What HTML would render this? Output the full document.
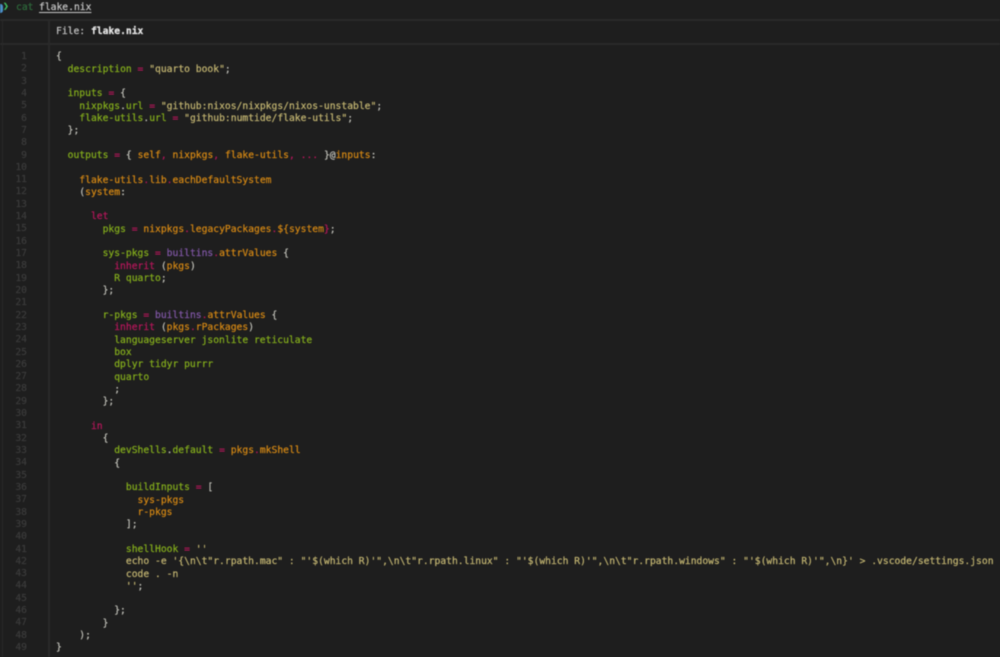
<!DOCTYPE html>
<html><head><meta charset="utf-8"><style>
html,body{margin:0;padding:0;width:1000px;height:657px;overflow:hidden;background:#1e1e1e}
#w{position:relative;width:1000px;height:657px;overflow:hidden;filter:blur(.4px);font-family:"DejaVu Sans Mono","Liberation Mono",monospace;font-size:9.685px;color:#c4c4bc;-webkit-text-stroke:.2px currentColor}
.a{position:absolute;white-space:pre}
pre{margin:0;position:absolute;font:inherit;line-height:12.313px;white-space:pre}
.r{position:absolute;background:#2a2a2a}
i{font-style:normal}
.g{color:#86b01c}.o{color:#d88a14}.p{color:#b8175c}.s{color:#c6b873}.v{color:#8258a8}.w{color:#c4c4bc}
</style></head><body><div id="w">
<div class="r" style="left:0;top:19px;width:1000px;height:2px"></div>
<div class="r" style="left:0;top:43px;width:1000px;height:2px"></div>
<div class="r" style="left:48px;top:19px;width:2px;height:638px"></div>
<div class="r" style="left:2px;top:19px;width:1px;height:638px"></div>
<div class="a" style="left:-2px;top:4px;width:5px;height:9px;border-radius:3px;background:#4a8fc8"></div>
<div class="a" style="left:3px;top:1px;color:#3fc060;font-weight:bold">❯</div>
<div class="a" style="left:16px;top:2px;color:#2f6b3c">cat</div>
<div class="a" style="left:39px;top:2px;color:#c8c8c8;text-decoration:underline;text-underline-offset:2px">flake.nix</div>
<div class="a" style="left:56px;top:26px;color:#c4c4c4">File: <b style="color:#e8e8e8">flake.nix</b></div>
<pre style="left:0;width:27px;top:51px;text-align:right;color:#3c3c3c">1
2
3
4
5
6
7
8
9
10
11
12
13
14
15
16
17
18
19
20
21
22
23
24
25
26
27
28
29
30
31
32
33
34
35
36
37
38
39
40
41
42
43
44
45
46
47
48
49</pre>
<pre style="left:56px;top:51.4px">{
  <i class="g">description</i> <i class="p">=</i> <i class="s">"quarto book"</i>;

  <i class="g">inputs</i> <i class="p">=</i> {
    <i class="g">nixpkgs</i>.<i class="g">url</i> <i class="p">=</i> <i class="s">"github:nixos/nixpkgs/nixos-unstable"</i>;
    <i class="g">flake-utils</i>.<i class="g">url</i> <i class="p">=</i> <i class="s">"github:numtide/flake-utils"</i>;
  };

  <i class="g">outputs</i> <i class="p">=</i> { <i class="o">self</i><i class="p">,</i> <i class="o">nixpkgs</i><i class="p">,</i> <i class="o">flake-utils</i><i class="p">, ...</i> }@<i class="o">inputs</i>:

    <i class="o">flake-utils</i><i class="p">.</i><i class="o">lib</i><i class="p">.</i><i class="o">eachDefaultSystem</i>
    (<i class="o">system</i>:

      <i class="p">let</i>
        <i class="g">pkgs</i> <i class="p">=</i> <i class="o">nixpkgs</i><i class="p">.</i><i class="o">legacyPackages</i><i class="p">.</i><i class="o">${system</i><i class="p">}</i>;

        <i class="g">sys-pkgs</i> <i class="p">=</i> <i class="v">builtins</i><i class="p">.</i><i class="o">attrValues</i> {
          <i class="p">inherit</i> (<i class="o">pkgs</i>)
          <i class="g">R quarto</i>;
        };

        <i class="g">r-pkgs</i> <i class="p">=</i> <i class="v">builtins</i><i class="p">.</i><i class="o">attrValues</i> {
          <i class="p">inherit</i> (<i class="o">pkgs</i><i class="p">.</i><i class="o">rPackages</i>)
          <i class="g">languageserver jsonlite reticulate</i>
          <i class="g">box</i>
          <i class="g">dplyr tidyr purrr</i>
          <i class="g">quarto</i>
          ;
        };

      <i class="p">in</i>
        {
          <i class="g">devShells</i>.<i class="g">default</i> <i class="p">=</i> <i class="o">pkgs</i><i class="p">.</i><i class="o">mkShell</i>
          {

            <i class="g">buildInputs</i> <i class="p">=</i> [
              <i class="o">sys-pkgs</i>
              <i class="o">r-pkgs</i>
            ];

            <i class="g">shellHook</i> <i class="p">=</i> <i class="s">''</i>
            <i class="s">echo -e '{\n\t"r.rpath.mac" : "'$(which R)'",\n\t"r.rpath.linux" : "'$(which R)'",\n\t"r.rpath.windows" : "'$(which R)'",\n}' &gt; .vscode/settings.json</i>
            <i class="s">code . -n</i>
            <i class="s">''</i>;

          };
        }
    );
}</pre>
</div></body></html>
